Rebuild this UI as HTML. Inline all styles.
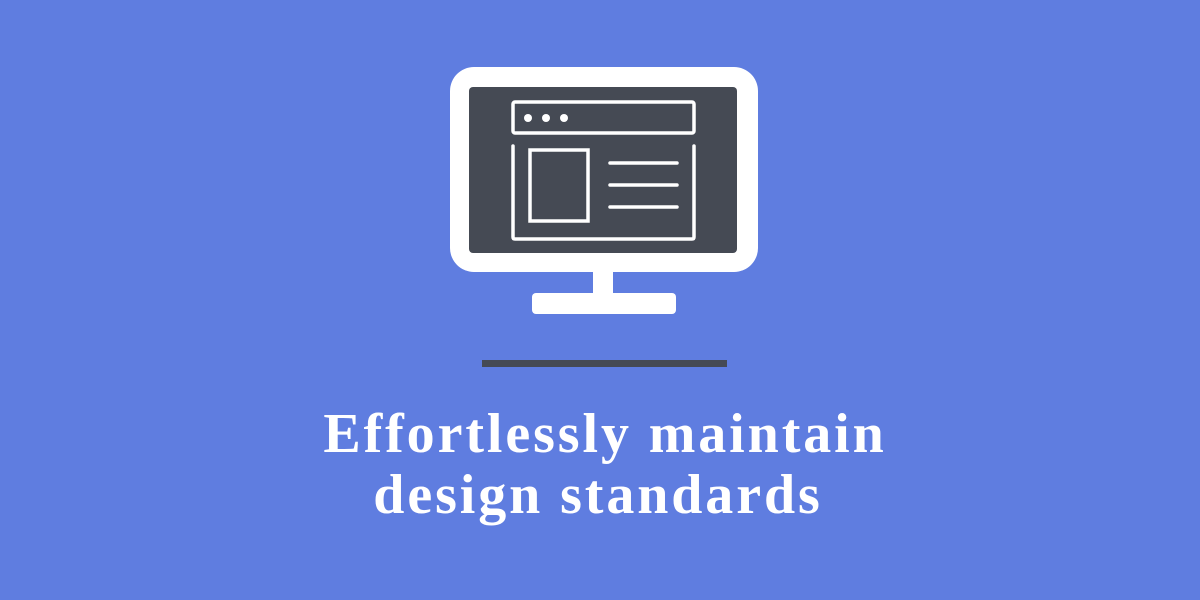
<!DOCTYPE html>
<html><head><meta charset="utf-8"><style>
html,body{margin:0;padding:0;}
body{width:1200px;height:600px;background:#5f7de0;position:relative;overflow:hidden;}
.t{position:absolute;left:5px;width:1200px;text-align:center;color:#fff;font-family:"Liberation Serif",serif;font-weight:bold;font-size:56px;letter-spacing:2.9px;line-height:62px;}
</style></head><body>
<svg width="1200" height="600" style="position:absolute;left:0;top:0">
<rect x="450" y="67" width="308" height="205" rx="24" fill="#fff"/>
<rect x="469" y="87" width="268" height="166" rx="4" fill="#454a54"/>
<rect x="513" y="102" width="181" height="31" rx="2" fill="none" stroke="#fff" stroke-width="3.5"/>
<circle cx="528" cy="118" r="4" fill="#fff"/>
<circle cx="546" cy="118" r="4" fill="#fff"/>
<circle cx="564" cy="118" r="4" fill="#fff"/>
<path d="M513 146 V237 Q513 239 515 239 H692 Q694 239 694 237 V146" fill="none" stroke="#fff" stroke-width="3.5" stroke-linecap="round"/>
<rect x="530" y="150" width="58" height="71" fill="none" stroke="#fff" stroke-width="3.5"/>
<g stroke="#fff" stroke-width="3.5" stroke-linecap="round"><line x1="610" y1="163" x2="677" y2="163"/><line x1="610" y1="185" x2="677" y2="185"/><line x1="610" y1="207" x2="677" y2="207"/></g>
<rect x="593" y="268" width="20" height="28" fill="#fff"/>
<rect x="532" y="293" width="144" height="21" rx="4" fill="#fff"/>
<rect x="482" y="360" width="245" height="7" fill="#454a54"/>
</svg>
<div class="t" style="top:403px">Effortlessly maintain</div>
<div class="t" style="top:464px;left:-2px">design standards</div>
</body></html>
